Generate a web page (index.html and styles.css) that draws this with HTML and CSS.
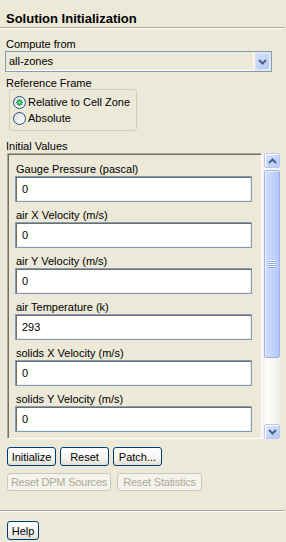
FILE: index.html
```html
<!DOCTYPE html>
<html>
<head>
<meta charset="utf-8">
<link rel="stylesheet" href="styles.css">
</head>
<body>
<div class="title">Solution Initialization</div>
<div class="main">
  <div class="lbl lbl-compute">Compute from</div>
  <div class="combo">
    <span class="combo-text">all-zones</span>
    <span class="combo-btn"><svg width="9" height="6" viewBox="0 0 9 6"><path d="M1 1l3.5 3.5L8 1" fill="none" stroke="#4D6185" stroke-width="2"/></svg></span>
  </div>
  <div class="lbl lbl-ref">Reference Frame</div>
  <div class="group">
    <div class="radio"><span class="rb checked"></span>Relative to Cell Zone</div>
    <div class="radio"><span class="rb"></span>Absolute</div>
  </div>
  <div class="lbl lbl-init">Initial Values</div>
  <div class="scrollarea">
    <div class="pane">
      <div class="field"><div class="flabel">Gauge Pressure (pascal)</div><input class="finput" type="text" value="0"></div>
      <div class="field"><div class="flabel">air X Velocity (m/s)</div><input class="finput" type="text" value="0"></div>
      <div class="field"><div class="flabel">air Y Velocity (m/s)</div><input class="finput" type="text" value="0"></div>
      <div class="field"><div class="flabel">air Temperature (k)</div><input class="finput" type="text" value="293"></div>
      <div class="field"><div class="flabel">solids X Velocity (m/s)</div><input class="finput" type="text" value="0"></div>
      <div class="field"><div class="flabel">solids Y Velocity (m/s)</div><input class="finput" type="text" value="0"></div>
    </div>
    <div class="vscroll">
      <div class="sb-btn"><svg width="9" height="6" viewBox="0 0 9 6"><path d="M1 5l3.5-3.5L8 5" fill="none" stroke="#4D6185" stroke-width="2"/></svg></div>
      <div class="thumb"><div class="grip"></div></div>
      <div class="track"></div>
      <div class="sb-btn"><svg width="9" height="6" viewBox="0 0 9 6"><path d="M1 1l3.5 3.5L8 1" fill="none" stroke="#4D6185" stroke-width="2"/></svg></div>
    </div>
  </div>
  <div class="btnrow">
    <button class="btn w-init">Initialize</button>
    <button class="btn w-reset">Reset</button>
    <button class="btn w-patch">Patch...</button>
  </div>
  <div class="btnrow2">
    <button class="btn dis w-dpm">Reset DPM Sources</button>
    <button class="btn dis w-stat">Reset Statistics</button>
  </div>
</div>
<div class="footer">
  <button class="btn w-help">Help</button>
</div>
</body>
</html>
```
FILE: styles.css
```css
* { box-sizing: border-box; }
body {
  margin: 0;
  width: 286px;
  height: 542px;
  overflow: hidden;
  background: #ECE9D8;
  font-family: "Liberation Sans", Arial, sans-serif;
  font-size: 11px;
  color: #000;
}
.title {
  width: 285px;
  height: 28px;
  padding: 11px 0 0 6px;
  font-size: 13px;
  line-height: 15px;
  font-weight: bold;
  border-bottom: 1px solid #ACA899;
  box-shadow: 0 1px 0 #fff;
}
.main { padding: 10px 0 0 5px; }
.lbl { padding-left: 1px; line-height: 13px; }
.lbl-ref { margin-top: 5px; line-height: 12px; }
.lbl-init { margin-top: 8px; line-height: 14px; }

.combo {
  width: 267px;
  height: 21px;
  border: 1px solid #7F9DB9;
  display: flex;
}
.combo-text {
  flex: 1;
  padding-left: 3px;
  line-height: 18px;
  border-bottom: 1px solid #fff;
  border-right: 1px solid #fff;
}
.combo-btn {
  width: 15px;
  height: 17px;
  margin: 1px 1px 1px 1px;
  border: 1px solid #DCE6FD;
  border-radius: 2px;
  background: linear-gradient(135deg, #D3E0FD, #B5C9F7);
  display: flex;
  align-items: center;
  justify-content: center;
}

.group {
  margin-left: 4px;
  width: 128px;
  height: 42px;
  border: 1px solid #D0D0BF;
  border-radius: 3px;
  padding: 4px 0 0 3px;
}
.radio {
  display: flex;
  align-items: center;
  height: 16px;
  gap: 2px;
}
.rb {
  width: 13px;
  height: 13px;
  border-radius: 50%;
  border: 1px solid #1C5180;
  background: linear-gradient(135deg, #DCDCD7, #FFFFFF);
}
.rb.checked {
  background: radial-gradient(circle, #7FD6A0 0, #3AAE68 2px, #2A9A55 3px, transparent 3.2px), linear-gradient(135deg, #DCDCD7, #FFFFFF);
}

.scrollarea {
  display: flex;
  height: 286px;
  margin-left: 2px;
}
.pane {
  width: 255px;
  height: 286px;
  border-left: 1px solid #ACA899;
  border-top: 1px solid #ACA899;
  border-right: 1px solid #fff;
  border-bottom: 1px solid #fff;
  box-shadow: inset 1px 1px 0 #716F64;
  overflow: hidden;
  padding: 8px 0 0 7px;
}
.field { margin-bottom: 6px; }
.flabel { height: 14px; line-height: 14px; padding-left: 1px; }
.finput {
  display: block;
  width: 237px;
  height: 26px;
  margin: 0;
  border: 1px solid #7F9DB9;
  box-shadow: inset 1px 1px 0 #716F64, inset -1px -1px 0 #F1EFE2;
  background: #fff;
  padding: 0 0 1px 6px;
  font-family: inherit;
  font-size: 11px;
  color: #000;
  outline: none;
}

.vscroll {
  width: 18px;
  height: 286px;
  padding-left: 2px;
  display: flex;
  flex-direction: column;
  background: linear-gradient(90deg, #F3F1EC, #FEFEFB 30%, #F1EFE8);
}
.sb-btn {
  width: 16px;
  height: 15px;
  border: 1px solid #B7C9F1;
  border-radius: 2px;
  background: linear-gradient(135deg, #DAE5FE, #B6CAF7);
  box-shadow: inset 1px 1px 0 #fff;
  display: flex;
  align-items: center;
  justify-content: center;
}
.thumb {
  width: 16px;
  height: 188px;
  margin-top: 2px;
  border: 1px solid #9BB2EA;
  border-radius: 2px;
  background: linear-gradient(90deg, #D0DDFC, #C2D4FC 50%, #B4C8F6);
  box-shadow: inset 1px 1px 0 #EEF3FE;
  display: flex;
  align-items: center;
  justify-content: center;
}
.grip {
  width: 8px;
  height: 8px;
  background: repeating-linear-gradient(#EEF4FE 0 1px, #8CB0F8 1px 2px);
}
.track { flex: 1; }

.btnrow {
  display: flex;
  gap: 4px;
  margin: 8px 0 0 2px;
}
.btnrow2 {
  display: flex;
  gap: 6px;
  margin: 7px 0 0 2px;
}
.btn {
  height: 19px;
  margin: 0;
  padding: 0;
  border: 1px solid #003C74;
  border-radius: 3px;
  background: linear-gradient(#FFFFFF, #F4F4F0 60%, #E3E0D4);
  font-family: inherit;
  font-size: 11px;
  color: #000;
  text-align: center;
}
.btn.dis {
  height: 18px;
  border-color: #C9C7BA;
  background: #F5F4EA;
  color: #ACA899;
  letter-spacing: -0.2px;
}
.w-init { width: 49px; }
.w-reset { width: 49px; }
.w-patch { width: 49px; }
.w-dpm { width: 104px; }
.w-stat { width: 85px; }
.w-help { width: 32px; }

.footer {
  width: 285px;
  margin-top: 19px;
  border-top: 1px solid #ACA899;
  box-shadow: inset 0 1px 0 #fff;
  padding: 10px 0 0 7px;
}
```
